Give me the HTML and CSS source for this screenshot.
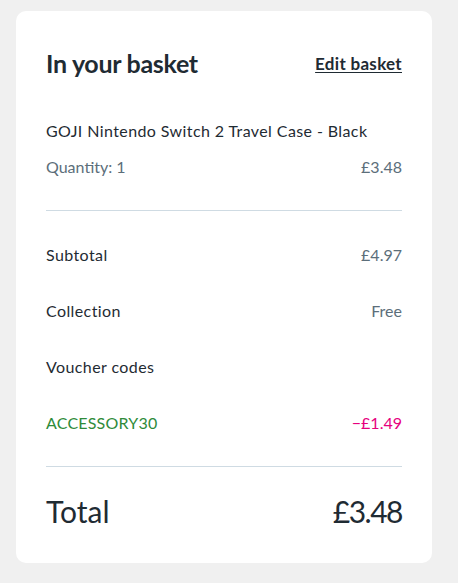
FILE: index.html
```html
<!DOCTYPE html>
<html lang="en">
<head>
<meta charset="utf-8">
<title>Basket</title>
<link rel="stylesheet" href="styles.css">
</head>
<body>
<section class="card">
  <header class="card-head">
    <h2 class="title">In your basket</h2>
    <a class="edit" href="#">Edit basket</a>
  </header>
  <div class="product">
    <p class="product-name">GOJI Nintendo Switch 2 Travel Case - Black</p>
    <div class="row-line muted">
      <span>Quantity: 1</span>
      <span>£3.48</span>
    </div>
  </div>
  <div class="summary">
    <div class="row"><span class="label">Subtotal</span><span class="muted">£4.97</span></div>
    <div class="row"><span class="label">Collection</span><span class="muted">Free</span></div>
    <div class="row"><span class="label">Voucher codes</span></div>
    <div class="row"><span class="label code">ACCESSORY30</span><span class="discount">−£1.49</span></div>
  </div>
  <div class="total">
    <span>Total</span>
    <span class="total-price">£3.48</span>
  </div>
</section>
</body>
</html>
```
FILE: styles.css
```css
* { box-sizing: border-box; }
body {
  margin: 0;
  background: #f0f0f0;
  font-family: Lato, "Noto Sans", sans-serif;
  color: #1f2b33;
}
.card {
  margin: 11px 0 0 16px;
  width: 416px;
  height: 552px;
  background: #fff;
  border-radius: 10px;
  padding: 36px 30px 33px;
}
.card-head {
  display: flex;
  justify-content: space-between;
  align-items: center;
  height: 32px;
}
.title {
  margin: 0;
  font-size: 25px;
  font-weight: 700;
  line-height: 32px;
  letter-spacing: -0.3px;
}
.edit {
  color: #1f2b33;
  font-size: 17px;
  font-weight: 700;
  letter-spacing: 0.3px;
  text-decoration: underline;
  text-underline-offset: 2px;
}
.product {
  margin-top: 40px;
  padding-bottom: 31px;
  border-bottom: 1px solid #cfdbe3;
}
.product-name {
  margin: 0;
  font-size: 16px;
  line-height: 24px;
  letter-spacing: 0.4px;
}
.row-line {
  display: flex;
  justify-content: space-between;
  margin-top: 12px;
  font-size: 16px;
  line-height: 24px;
}
.muted { color: #5c6e7a; }
.summary {
  padding: 16px 0 15px;
  border-bottom: 1px solid #cfdbe3;
}
.row {
  display: flex;
  justify-content: space-between;
  padding: 16px 0;
  font-size: 16px;
  line-height: 24px;
}
.label { letter-spacing: 0.4px; }
.code { color: #2e8b3a; letter-spacing: 0.2px; }
.discount { color: #e6007e; }
.total {
  display: flex;
  justify-content: space-between;
  margin-top: 26px;
  font-size: 30px;
  line-height: 36px;
}
.total-price { letter-spacing: -1.5px; }
```
